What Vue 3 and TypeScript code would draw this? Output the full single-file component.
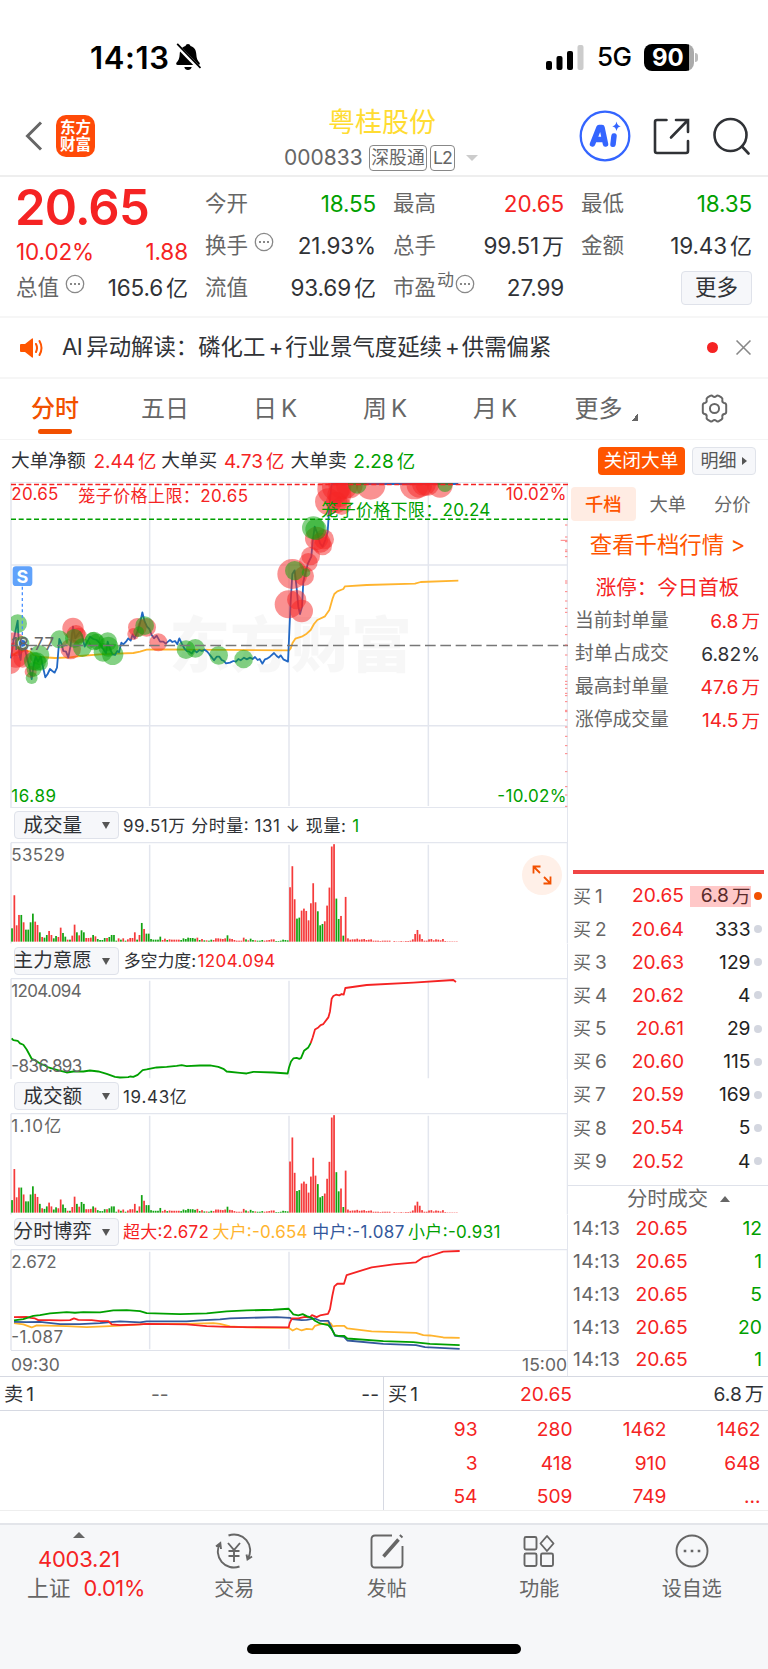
<script setup lang="ts">
type Tone = 'up' | 'down' | 'ink'

interface Quote { label: string; value: string; tone: Tone; info?: boolean; sup?: string }

const quotes: Quote[] = [
  { label: '今开', value: '18.55', tone: 'down' },
  { label: '最高', value: '20.65', tone: 'up' },
  { label: '最低', value: '18.35', tone: 'down' },
  { label: '换手', value: '21.93%', tone: 'ink', info: true },
  { label: '总手', value: '99.51万', tone: 'ink' },
  { label: '金额', value: '19.43亿', tone: 'ink' },
  { label: '流值', value: '93.69亿', tone: 'ink' },
  { label: '市盈', value: '27.99', tone: 'ink', info: true, sup: '动' },
]

const sealStats: { label: string; value: string; tone: Tone }[] = [
  { label: '当前封单量', value: '6.8万', tone: 'up' },
  { label: '封单占成交', value: '6.82%', tone: 'ink' },
  { label: '最高封单量', value: '47.6万', tone: 'up' },
  { label: '涨停成交量', value: '14.5万', tone: 'up' },
]

const bids: [string, string][] = [
  ['20.65', '6.8万'], ['20.64', '333'], ['20.63', '129'], ['20.62', '4'], ['20.61', '29'],
  ['20.60', '115'], ['20.59', '169'], ['20.54', '5'], ['20.52', '4'],
]
const trades = ['12', '1', '5', '20', '1']
const queue = ['93', '280', '1462', '1462', '3', '418', '910', '648', '54', '509', '749', '...']

/* Charts are drawn in units of one third of a pixel. */
const pricePath = '33,550 40,500 46,470 53,437 58,540 62,555 66,505 72,510 80,545 88,575 95,612 101,570 107,545 114,560 122,545 128,572 136,607 143,597 150,582 157,588 164,593 171,578 178,492 184,505 190,528 198,530 205,547 212,510 219,455 226,490 232,480 240,470 247,485 254,515 262,500 270,485 280,492 290,495 300,505 308,520 318,535 323,500 331,525 338,538 345,540 352,528 357,532 364,503 370,508 378,500 385,490 392,497 398,478 404,490 412,470 420,445 427,412 434,440 441,455 448,462 455,480 462,490 470,482 480,500 490,500 497,506 504,500 510,495 517,501 525,498 532,508 538,490 545,505 553,520 560,528 568,530 575,536 582,525 590,532 598,525 606,528 614,524 622,530 628,538 636,548 642,556 650,545 658,545 665,555 672,558 678,565 690,563 700,558 708,560 715,552 722,556 732,548 740,553 750,548 758,552 765,546 773,555 779,552 787,566 795,553 803,550 810,545 822,534 830,543 836,548 842,541 850,553 858,557 864,560 868,470 872,380 877,297 884,286 890,340 895,395 900,417 906,395 910,320 916,295 924,265 934,245 938,200 944,155 952,175 960,205 968,215 976,195 983,170 988,95 995,27 1375,27'
const avgPath = '33,545 45,535 60,530 75,526 90,529 100,540 120,546 165,549 210,547 240,543 300,538 350,536 400,534 420,530 440,524 480,523 867,526 872,520 878,503 886,491 905,485 920,476 932,465 942,447 952,435 975,424 988,405 998,370 1003,357 1012,349 1030,342 1035,334 1100,330 1245,326 1262,321 1375,317'

const buyDots: number[][] = [
  [42, 508, 36], [48, 540, 38], [30, 565, 32], [68, 550, 28], [92, 590, 18], [212, 522, 31], [219, 460, 32], [228, 478, 28], [236, 482, 24],
  [400, 477, 18], [412, 457, 28], [440, 457, 28], [475, 502, 27],
  [877, 297, 45], [866, 388, 42], [890, 374, 29], [905, 408, 34], [912, 303, 30], [925, 262, 28], [932, 243, 28],
  [950, 190, 35], [972, 193, 30], [968, 213, 28], [962, 203, 30],
  [985, 80, 40], [1000, 42, 48], [1010, 35, 44], [1030, 28, 45], [1025, 92, 28], [1010, 82, 32], [1048, 30, 40], [1112, 30, 44], [1018, 60, 36],
  [1243, 30, 43], [1258, 30, 38], [1272, 26, 36], [1282, 26, 36], [1320, 30, 38],
]
const sellDots: number[][] = [
  [53, 446, 28], [66, 505, 22], [178, 493, 27], [247, 518, 28], [223, 490, 28], [282, 498, 28], [278, 493, 22], [290, 500, 24],
  [323, 500, 28], [309, 532, 28], [325, 515, 30], [338, 538, 32], [118, 540, 30], [110, 560, 28], [122, 565, 22], [100, 558, 28],
  [95, 609, 18], [102, 583, 22], [416, 470, 16], [434, 452, 28], [558, 524, 28], [586, 520, 28], [656, 541, 28], [731, 552, 28],
  [884, 287, 29], [918, 293, 13], [940, 158, 34], [948, 163, 32], [1072, 28, 28], [1335, 28, 23],
]
const ticks = [150, 186, 196, 200, 225, 230, 245, 318, 324, 350, 378, 400, 412, 454, 479, 510, 540, 575, 582, 600, 619, 628, 640, 655, 662, 680, 706, 710, 735, 756, 784, 812, 836, 890, 935, 960, 994]

interface Bar { x: number; h: number; up: boolean }
const volumeCode = 'g40 r139 r49 r80 g80 r58 g36 g36 g58 g84 r60 r50 g28 r14 g12 g20 r32 r20 g10 g17 r14 r42 g26 g15 r6 g6 r18 r51 g28 r19 g34 g28 r11 r11 r12 g20 r16 g8 g5 g5 g11 r11 g14 g20 g20 g3 r10 g6 r10 g3 r7 r11 r11 r28 g6 r20 g56 r38 g24 g24 g8 g6 g6 g6 g15 r5 r9 g5 r7 r6 r6 r6 r6 g5 g10 g8 g12 g11 g11 g9 r12 g5 r8 g4 r4 g3 g6 r5 r10 r10 r9 r8 r10 g19 r9 r8 r5 r3 r3 r3 r12 g7 r4 g9 g5 r4 g3 g3 g5 r3 r4 r5 r7 r7 g2 g2 g3 g6 g5 g4 r163 r226 r127 g69 g72 r93 r99 r92 r64 r115 r175 r118 g91 g49 g53 r61 r108 r162 r285 r292 g129 g68 r77 g18 r134 r10 r6 r7 r7 r9 r6 r7 r8 r5 r6 r7 r3 r3 r3 r2 r3 r3 r3 r3 r0 r2 r1 r1 r2 r1 r2 r2 r3 r7 r23 r35 r22 r8 r3 r3 r7 r8 r4 r7 r6 r4 r8 r2 r1 r1 r1 r1 r1'
const toBars = (scale: number): Bar[] =>
  volumeCode.split(' ').map((item, i) => {
    const raw = Number(item.slice(1))
    const h = raw > 200 ? raw - (1 - scale) * Math.max(0, 290 - raw) * 0.2 : raw * scale
    return { x: 33.500 + i * 6.95, h, up: item[0] === 'r' }
  })

const bearPath = '35,181 40,186 53,188 60,196 70,200 80,214 95,242 105,246 120,256 135,262 145,268 170,275 200,283 220,280 250,280 270,277 295,280 320,287 345,296 360,298 385,297 390,295 400,296 413,290 428,276 440,274 470,268 500,266 530,263 545,261 560,264 600,262 630,262 655,266 670,272 680,280 720,284 740,286 760,281 820,283 863,286 867,268 873,250 880,241 890,239 898,242 903,240 912,218 925,208 932,195'
const bullPath = '932,195 938,178 945,154 955,148 962,141 970,138 985,118 990,100 995,62 1000,54 1008,50 1018,52 1025,48 1031,50 1036,30 1100,21 1240,14 1360,6 1368,12'
const game = [
  { c: 'gold', p: '42,222 70,226 95,235 110,229 200,231 260,234 330,231 400,227 440,224 560,224 640,222 660,224 690,232 740,235 866,236 878,244 890,238 905,244 920,239 937,241 945,230 960,226 985,222 992,222 998,232 1010,230 1032,230 1042,238 1115,247 1248,251 1270,258 1290,259 1330,265 1379,266' },
  { c: 'blue', p: '42,218 80,219 120,218 180,225 240,225 300,222 330,219 360,217 420,220 440,217 560,217 600,214 660,211 690,208 830,204 870,206 876,210 905,213 920,212 945,208 960,215 985,215 995,238 1005,260 1032,263 1042,274 1150,284 1248,288 1275,294 1379,299' },
  { c: 'red', p: '42,204 80,203 92,206 105,208 115,213 150,213 180,214 210,213 222,208 235,212 275,213 300,216 325,216 335,226 360,228 420,226 440,224 560,226 620,231 680,233 740,234 866,235 869,222 876,208 895,208 915,203 930,204 936,198 950,204 960,199 984,194 990,180 997,140 1003,112 1012,104 1032,104 1040,78 1115,55 1180,46 1248,40 1270,25 1290,21 1330,8 1379,6' },
  { c: 'green', p: '42,214 70,210 100,200 120,198 150,193 200,189 225,191 250,189 300,190 340,184 380,183 420,186 440,192 540,195 620,193 680,187 740,184 820,182 866,179 880,196 895,199 908,195 920,201 935,206 945,215 960,223 985,228 995,240 1005,258 1015,260 1032,260 1042,268 1150,276 1240,279 1290,284 1379,288' },
]

interface Panel {
  name: string
  kind: 'bars' | 'force' | 'game'
  notes: { t: string; c: string; w: number }[]
  top: string
  topW: number
  bottom?: string
  bottomW?: number
  bars?: Bar[]
}
const panels: Panel[] = [
  { name: '成交量', kind: 'bars', top: '53529', topW: 160, bars: toBars(1), notes: [{ t: '99.51万 分时量: 131 ↓ 现量:', c: 'ink', w: 670 }, { t: '1', c: 'down', w: 0 }] },
  { name: '主力意愿', kind: 'force', top: '1204.094', topW: 211, bottom: '-836.893', bottomW: 213, notes: [{ t: '多空力度:', c: 'ink', w: 218 }, { t: '1204.094', c: 'up', w: 234 }] },
  { name: '成交额', kind: 'bars', top: '1.10亿', topW: 150, bars: toBars(0.94), notes: [{ t: '19.43亿', c: 'ink', w: 192 }] },
  { name: '分时博弈', kind: 'game', top: '2.672', topW: 136, bottom: '-1.087', bottomW: 155, notes: [{ t: '超大:2.672', c: 'up', w: 258 }, { t: '大户:-0.654', c: 'gold', w: 286 }, { t: '中户:-1.087', c: 'blue', w: 277 }, { t: '小户:-0.931', c: 'down', w: 278 }] },
]
const noteX: number[][] = [[369, 1058], [371, 593], [369], [369, 638, 938, 1226]]
</script>

<template>
  <div class="app">
    <header class="status">
      <span class="clock">14:13</span>
      <svg class="bell" viewBox="0 0 26 28" width="26" height="28">
        <path d="M13 1c1.300 0 2.200.8 2.500 1.900 3.900 1.100 5.600 4.100 5.800 8.300.2 4.300 1.200 6.300 3.100 8.300.9 1 .3 2.500-1.100 2.500H2.700c-1.400 0-2-1.500-1.100-2.500 1.900-2 2.900-4 3.100-8.300.2-4.200 1.900-7.200 5.800-8.300C10.800 1.800 11.700 1 13 1z" />
        <path d="M9.300 24h7.400c-.4 2-1.800 3-3.700 3s-3.300-1-3.700-3z" />
        <path d="M1 1.500 25.500 26.500" class="bell-gap" /><path d="M2.200.8 25.500 25" class="bell-slash" />
      </svg>
      <svg class="signal" viewBox="0 0 38 25" width="38" height="25">
        <rect x="0" y="16" width="6" height="9" rx="2" /><rect x="10.500" y="11" width="6" height="14" rx="2" />
        <rect x="21" y="6" width="6" height="19" rx="2" /><rect x="31.500" y="0" width="6" height="25" rx="2" fill="#ccc" />
      </svg>
      <span class="net">5G</span>
      <span class="battery">90</span><i class="nub"></i>
    </header>

    <nav class="head">
      <svg class="back" viewBox="0 0 18 30" width="18" height="30"><path d="M16 1.500 2.500 15 16 28.500" /></svg>
      <div class="logo"><span>东方</span><span>财富</span></div>
      <div class="title">
        <h1>粤桂股份</h1>
        <div class="code"><span class="num">000833</span><span class="tag">深股通</span><span class="tag l2">L2</span><i></i></div>
      </div>
      <svg class="ai" viewBox="0 0 52 52" width="52" height="52">
        <circle cx="26" cy="26" r="24.300" fill="none" stroke="#3465ff" stroke-width="2.300" />
        <path d="M13.500 34 20 17.500h3l3.500 16.500M17 29.500h8" fill="none" stroke="#3465ff" stroke-width="5.500" stroke-linejoin="round" stroke-linecap="round" />
        <path d="m35 26-1 8.300" fill="none" stroke="#3465ff" stroke-width="5.500" stroke-linecap="round" />
        <path d="M37.500 11.500c.7 3 1.500 4 4.200 4.800-2.700.8-3.500 1.800-4.200 4.800-.7-3-1.500-4-4.200-4.800 2.700-.8 3.500-1.800 4.200-4.800z" fill="#3465ff" />
      </svg>
      <svg class="share" viewBox="0 0 37 37" width="37" height="37"><path d="M13.500 2H4Q2 2 2 4v29q0 2 2 2h29q2 0 2-2V23M18 19.500 34.500 2.500M23 2h12v12" /></svg>
      <svg class="search" viewBox="0 0 38 38" width="38" height="38"><circle cx="17.500" cy="18" r="16" /><path d="m29 29.500 6.500 7" /></svg>
    </nav>

    <section class="quote">
      <div class="last">
        <b>20.65</b>
        <div class="pair up"><span>10.02%</span><span>1.88</span></div>
        <div class="cell cap"><span class="lab">总值<svg class="info" viewBox="0 0 20 20"><circle cx="10" cy="10" r="8.700" /><path d="M5 10h2M9 10h2M13 10h2" /></svg></span><span class="val ink">165.6<em>亿</em></span></div>
      </div>
      <div class="cells">
        <div v-for="q in quotes" :key="q.label" class="cell">
          <span class="lab">{{ q.label }}<sup v-if="q.sup">{{ q.sup }}</sup><svg v-if="q.info" class="info" :class="{ tight: q.sup }" viewBox="0 0 20 20"><circle cx="10" cy="10" r="8.700" /><path d="M5 10h2M9 10h2M13 10h2" /></svg></span>
          <span class="val" :class="q.tone">{{ q.value.replace(/[万亿]/, '') }}<em v-if="/[万亿]/.test(q.value)">{{ q.value.slice(-1) }}</em></span>
        </div>
        <div class="cell"><button class="more">更多</button></div>
      </div>
    </section>

    <section class="notice">
      <svg viewBox="0 0 24 20" width="24" height="20"><path d="M1 6h4l7-5.500q1-.5 1 .8v17.400q0 1.300-1 .8L5 14H1Q0 14 0 13V7q0-1 1-1z" fill="#ff5500" /><path d="M16 6q2 4 0 8M19.500 3q4 7 0 14" fill="none" stroke="#ff5500" stroke-width="2" stroke-linecap="round" /></svg>
      <p><span class="lat">AI</span>异动解读：磷化工<span class="plus">+</span>行业景气度延续<span class="plus">+</span>供需偏紧</p>
      <i class="dot"></i>
      <svg class="close" viewBox="0 0 14 14" width="15" height="15"><path d="m.5.5 13 13M13.500.5l-13 13" /></svg>
    </section>

    <section class="tabs">
      <span class="tab on">分时</span><span class="tab">五日</span><span class="tab">日<u>K</u></span><span class="tab">周<u>K</u></span><span class="tab">月<u>K</u></span>
      <span class="tab wide">更多<i></i></span>
      <span class="tab gear"><svg viewBox="0 0 28 28" width="29" height="29"><path d="M9.800 1.800q1.500-.9 2.600.4 1.600 1.500 3.200 0 1.100-1.300 2.600-.4l2.400 1.400q1.500 1 1 2.600-.5 2.300 1.700 2.900 2 .3 2 2v6.600q0 1.700-2 2-2.200.6-1.700 2.900.5 1.600-1 2.600l-2.400 1.400q-1.500.9-2.600-.4-1.600-1.500-3.200 0-1.100 1.300-2.600.4l-2.400-1.400q-1.500-1-1-2.600.5-2.300-1.700-2.900-2-.3-2-2v-6.600q0-1.700 2-2 2.200-.6 1.700-2.900-.5-1.600 1-2.600z" /><circle cx="14" cy="14" r="4.400" /></svg></span>
    </section>

    <section class="orders">
      <span>大单净额</span><span class="up n lead">2.44<em>亿</em></span><span>大单买</span><span class="up n">4.73<em>亿</em></span><span>大单卖</span><span class="down n">2.28<em>亿</em></span>
      <button class="hot">关闭大单</button><button class="detail">明细<i></i></button>
    </section>

    <main class="board">
      <div class="charts">
        <svg class="price" viewBox="0 21 1704 978" preserveAspectRatio="none">
          <text x="508" y="577" class="mark" textLength="728">东方财富</text>
          <g class="grid"><path d="M33 22H1704M33 270H1704M33 752H1704M33 998.500H1704M33 22V999M449 30V993M867 30V993M1285 30V993M1702.500 22V999" /></g>
          <polyline :points="avgPath" class="line gold" />
          <polyline :points="pricePath" class="line navy" />
          <circle v-for="(d, i) in buyDots" :key="'b' + i" :cx="d[0]" :cy="d[1]" :r="d[2]" fill="#f52323" fill-opacity=".5" :clip-path="'url(#plot)'" />
          <circle v-for="(d, i) in sellDots" :key="'s' + i" :cx="d[0]" :cy="d[1]" :r="d[2]" fill="#0aa30a" fill-opacity=".5" :clip-path="'url(#plot)'" />
          <clipPath id="plot"><rect x="33" y="24" width="1670" height="970" /></clipPath>
          <path d="M33 511.500H1704" stroke="#777" stroke-width="4" stroke-dasharray="32 14" />
          <path d="M33 28.500H1704" stroke="#f52323" stroke-width="4.500" stroke-dasharray="15 8" />
          <path d="M33 133H1704" stroke="#00a000" stroke-width="4.500" stroke-dasharray="15 8" />
          <path v-for="y in ticks" :key="y" :d="`M${y === 196 ? 1682 : 1695} ${y}H1702`" stroke="#f66" stroke-width="2.500" />
          <path d="M67 335V490" stroke="#4a90ff" stroke-width="4" stroke-dasharray="9 8" />
          <rect x="38" y="274" width="59" height="59" rx="10" fill="#60a2fb" />
          <text x="67" y="323" class="badge">S</text>
          <circle cx="67" cy="505" r="12" fill="#2a6fd0" stroke="#cfe3e6" stroke-width="4" />
          <text x="34" y="526" class="t grey" textLength="128">18.77</text>
          <text x="34" y="76" class="t red" textLength="141">20.65</text>
          <text x="235" y="80" class="t red" textLength="509" xml:space="preserve">笼子价格上限：20.65</text>
          <text x="964" y="122" class="t green" textLength="507">笼子价格下限：20.24</text>
          <text x="1517" y="75" class="t red" textLength="182">10.02%</text>
          <text x="34" y="981" class="t green" textLength="134">16.89</text>
          <text x="1492" y="981" class="t green" textLength="207">-10.02%</text>
        </svg>

        <section v-for="(p, pi) in panels" :key="p.name" class="panel">
          <header>
            <button class="pick"><span>{{ p.name }}</span><i></i></button>
            <svg class="notes" viewBox="357 0 1350 99">
              <text v-for="(n, ni) in p.notes" :key="n.t" :x="noteX[pi][ni]" y="69" class="t" :class="n.c" :textLength="n.w || undefined">{{ n.t }}</text>
            </svg>
          </header>
          <svg class="plot" viewBox="0 0 1704 304" preserveAspectRatio="none">
            <path class="grid" d="M33 1.500H1704M449 8V300M867 8V300M1285 8V300M33 2V304M1702.500 0V304" />
            <g v-if="p.bars">
              <rect v-for="b in p.bars" :key="b.x" :x="b.x" :y="298.500 - b.h" width="5.200" :height="b.h" :fill="b.up ? '#f53b3b' : '#12a312'" />
            </g>
            <g v-else-if="p.kind === 'force'"><polyline :points="bearPath" class="line green" /><polyline :points="bullPath" class="line red" /></g>
            <g v-else><polyline v-for="g in game" :key="g.c" :points="g.p" class="line" :class="g.c" /></g>
            <text x="34" y="57" class="t grey" :textLength="p.topW">{{ p.top }}</text>
            <text v-if="p.bottom" x="34" y="281" class="t grey" :textLength="p.bottomW">{{ p.bottom }}</text>
          </svg>
          <div v-if="pi === 0" class="expand"><svg viewBox="0 0 20 20" width="20" height="20"><path d="M1.500 8.500v-7h7M2 2l6 6M18.500 11.500v7h-7M18 18l-6-6" /></svg></div>
        </section>
        <footer class="axis"><span>09:30</span><span>15:00</span></footer>
      </div>

      <aside class="side">
        <div class="sub"><span class="on">千档</span><span>大单</span><span>分价</span></div>
        <div class="deep">查看千档行情 <span>&gt;</span></div>
        <div class="limit">涨停：今日首板</div>
        <div class="stats"><div v-for="s in sealStats" :key="s.label"><span>{{ s.label }}</span><span class="n" :class="s.tone">{{ s.value.replace('万', '') }}<em v-if="s.value.includes('万')">万</em></span></div></div>
        <div class="rule"></div>
        <div class="bids">
          <div v-for="(b, i) in bids" :key="b[0]" :class="{ first: i === 0 }">
            <span class="lv">买<em>{{ i + 1 }}</em></span><span class="px">{{ b[0] }}</span>
            <span class="qty"><b>{{ b[1].replace('万', '') }}<em v-if="i === 0">万</em></b></span><i></i>
          </div>
        </div>
        <div class="deal-title">分时成交<i></i></div>
        <div class="deals"><div v-for="(t, i) in trades" :key="i"><span class="time">14:13</span><span class="up">20.65</span><span class="down">{{ t }}</span></div></div>
      </aside>
    </main>

    <section class="depth">
      <div class="ask"><div class="row"><span>卖<em>1</em></span><span class="dash">--</span><span>--</span></div></div>
      <div class="bid">
        <div class="row"><span>买<em>1</em></span><span class="up">20.65</span><span>6.8<em>万</em></span></div>
        <div class="queue"><span v-for="(q, i) in queue" :key="i">{{ q }}</span></div>
      </div>
    </section>

    <footer class="bar">
      <div class="items">
        <div class="index"><i></i><span class="up">4003.21</span><p>上证<span class="up">0.01%</span></p></div>
        <div class="item"><svg viewBox="0 0 38 36"><path d="M13.500 2.500A16 16 0 0 1 33 25.500M24.500 33.500A16 16 0 0 1 5 10.500M1 13.500l4.300-3.500.7 6M37 23.500l-4.500 3-1-5M13 10l6 7 6-7M19 17v12M13.500 18h11M13.500 23h11" /></svg><span>交易</span></div>
        <div class="item"><svg viewBox="0 0 38 36"><path d="M24 2.500H7Q3.500 2.500 3.500 6v25q0 3.500 3.500 3.500h24q3.500 0 3.500-3.500V13" /><path d="m15.500 23.500 15-17M32.500 4l1.300-1.500" stroke-width="3.500" /></svg><span>发帖</span></div>
        <div class="item"><svg viewBox="0 0 38 36"><rect x="4.500" y="4" width="12" height="12.500" rx="1.500" /><rect x="4.500" y="20.500" width="12" height="12.500" rx="1.500" /><rect x="21" y="20.500" width="12" height="12.500" rx="1.500" /><path d="m27 3 6.500 7.500L27 18l-6.500-7.500z" stroke-linejoin="round" /></svg><span>功能</span></div>
        <div class="item"><svg viewBox="0 0 38 36"><circle cx="19" cy="18" r="15.500" /><path d="M10.700 18h2.600M17.700 18h2.600M24.700 18h2.600" stroke-width="2.600" /></svg><span>设自选</span></div>
      </div>
      <div class="home"></div>
    </footer>
  </div>
</template>

<style>
body { margin: 0; background: #fff; }
</style>

<style scoped>
.app { width: 768px; height: 1669px; overflow: hidden; background: #fff; color: #303236; font-family: Inter, "Noto Sans CJK SC", sans-serif; font-size: 20px; line-height: 1; white-space: nowrap; }
.app * { box-sizing: border-box; }
em, i, u { font-style: normal; text-decoration: none; }
i { display: block; }
button { font: inherit; padding: 0; margin: 0; color: inherit; }
.up { color: #f52323; } .down { color: #00a000; } .ink { color: #303236; }
.status { height: 93px; padding: 21px 0 0 90px; display: flex; align-items: center; color: #000; }
.clock { font-size: 31px; font-weight: 600; width: 85px; letter-spacing: .6px; }
.bell-gap { stroke: #fff; stroke-width: 4; } .bell-slash { stroke: #000; stroke-width: 1.8; }
.signal { margin-left: 345px; }
.net { font-size: 26px; font-weight: 500; width: 46px; margin-left: 13px; letter-spacing: -.5px; }
.battery { margin-left: 1px; width: 50px; height: 27px; border-radius: 8px; background: linear-gradient(90deg, #000 45px, #aaa 45px); color: #fff; font-weight: 700; font-size: 24px; line-height: 27px; padding-left: 8px; }
.nub { width: 3px; height: 9px; background: #bbb; border-radius: 0 3px 3px 0; margin-left: 1px; }
.head { height: 84px; border-bottom: 2px solid #eee; display: flex; align-items: center; padding: 4px 17px 0 25px; }
.back path { fill: none; stroke: #666; stroke-width: 3; }
.logo { margin-left: 13px; width: 41px; height: 42px; background: #ff4a08; border-radius: 10px; color: #fff; font-weight: 700; font-size: 15.500px; line-height: 17px; display: grid; place-content: center; }
.title { width: 300px; margin-left: 137px; text-align: center; padding-top: 7px; }
h1 { margin: 0 0 9px; width: 300px; font-size: 27px; font-weight: 400; color: #ffdc32; line-height: 27px; }
.code { display: flex; align-items: center; height: 26px; padding-left: 52px; color: #666; }
.num { font-size: 21px; width: 85px; text-align: left; letter-spacing: 0; }
.tag { border: 1.500px solid #888; border-radius: 4px; width: 58px; height: 26px; line-height: 24px; font-size: 17.800px; }
.l2 { width: 25px; margin-left: 3px; letter-spacing: -1px; }
.code i { border: 6px solid transparent; border-top-color: #ccc; border-bottom: 0; margin-left: 11px; }
.ai { margin-left: 47px; } .share { margin-left: 22px; } .search { margin-left: 23px; }
.share path, .search * { fill: none; stroke: #303236; stroke-width: 2.600; stroke-linecap: round; }
.quote { height: 141px; border-bottom: 2px solid #f6f6f6; padding: 6px 16px 0 17px; display: flex; gap: 17px; }
.last { width: 171px; }
.last b { display: block; height: 48px; line-height: 50px; font-size: 49px; font-weight: 600; color: #f52323; letter-spacing: -.800px; margin-left: -2px; }
.pair { display: flex; justify-content: space-between; height: 41px; line-height: 42px; font-size: 22.500px; letter-spacing: -.1px; margin-left: -1px; }
.cells { flex: 1; display: grid; grid-template-columns: repeat(3, 171px); grid-auto-rows: 42px; column-gap: 17px; }
.cell { display: flex; justify-content: space-between; align-items: center; height: 42px; }
.cap { margin-top: -5px; height: 42px; margin-left: -1px; }
.lab { font-size: 21.500px; color: #666; display: flex; align-items: center; }
.val { font-size: 22.500px; letter-spacing: -.15px; display: flex; align-items: center; }
.val em { font-size: 22px; margin-left: 3px; letter-spacing: 0; }
.info { width: 20px; height: 20px; margin: -9px 0 0 6px; fill: none; stroke: #888; stroke-width: 1.300; } .info path { stroke-width: 1.800; } .info.tight { margin-left: 1px; }
sup { font-size: 17px; margin-top: -15px; line-height: 17px; margin-left: 1px; vertical-align: baseline; }
.more { width: 71px; height: 34px; margin-left: auto; border: 1.500px solid #dfe2ea; border-radius: 4px; background: #f6f7fa; font-size: 21.500px; }
.notice { height: 61px; border-bottom: 2px solid #f6f6f6; padding-left: 20px; display: flex; align-items: center; }
.notice p { margin: 0 0 0 18px; width: 645px; font-size: 22.400px; }
.lat { margin-right: 4px; letter-spacing: -.6px; } .plus { margin: 0 2px 0 3px; }
.dot { width: 11px; height: 11px; border-radius: 50%; background: #f52323; }
.close { margin-left: 18px; fill: none; stroke: #888; stroke-width: 1.500; }
.tabs { height: 61px; border-bottom: 1.500px solid #f4f4f4; display: flex; align-items: center; color: #666; font-size: 24px; }
.tab { width: 110px; display: flex; justify-content: center; align-items: center; height: 100%; position: relative; padding-bottom: 1px; }
.tab u { margin-left: 4px; }
.on { color: #f25000; font-weight: 500; }
.tab.on::after { content: ""; position: absolute; left: 38px; top: 50px; width: 34px; height: 5px; border-radius: 2.500px; background: #f25000; }
.wide { width: 102px; margin-right: 12px; } .wide i { width: 6px; height: 8px; background: linear-gradient(to bottom right, transparent 50%, #666 50%); margin: 17px -10px 0 9px; }
.gear svg, .close { overflow: visible; } .gear svg { fill: none; stroke: #666; stroke-width: 1.900; }
.gear { width: 100px; }
.orders { height: 42px; padding-left: 11px; display: flex; align-items: center; font-size: 18.700px; }
.orders .n { width: 60px; margin: 0 6.700px; display: flex; justify-content: space-between; font-size: 19px; }
.orders .lead { margin: 0 7.700px; }
.hot { width: 87px; height: 28px; background: #ff5500; color: #fff; border: 0; border-radius: 4px; margin-left: 177.500px; font-size: 18.700px; }
.detail { width: 64px; height: 28px; border: 1.500px solid #e0e3ea; background: #f6f7fa; border-radius: 4px; margin-left: 7px; color: #555; font-size: 18px; display: flex; align-items: center; justify-content: center; gap: 5px; }
.detail i { border: 4px solid transparent; border-left: 5px solid #555; border-right: 0; }
.board { height: 894px; display: grid; grid-template-columns: 568px 200px; }
svg { display: block; flex: none; }
.price { width: 568px; height: 326px; }
.grid, .grid path { fill: none; stroke: #e3e6ee; stroke-width: 4.500; }
.mark { font-family: "Noto Sans CJK SC", sans-serif; font-weight: 900; font-size: 182px; fill: #000; fill-opacity: .03; }
.t { font-size: 51px; fill: #303236; }
.t.grey { fill: #666; } .t.red, .t.up { fill: #f52323; } .t.green, .t.down { fill: #00a000; } .t.gold { fill: #ffb42e; } .t.blue { fill: #33589c; }
.badge { font-size: 54px; font-weight: 700; fill: #fff; text-anchor: middle; }
.line { fill: none; stroke-width: 5.400; stroke-linejoin: round; } .line.gold { stroke: #ffb42e; } .line.navy { stroke: #2268c4; } .line.red { stroke: #f52323; } .line.green { stroke: #00a000; } .line.blue { stroke: #33589c; }
.panel { height: 135.500px; position: relative; }
.panel header { height: 34px; display: flex; align-items: center; padding-left: 14px; border-right: 1px solid #e3e6ee; }
.pick { width: 104.500px; height: 28px; border: 1.500px solid #dfe2ea; border-radius: 4px; background: #f6f7fa; display: flex; align-items: center; font-size: 19.600px; padding: 1px 8px 0 0; }
.pick span { flex: 1; text-align: center; margin: 0 8px 0 -3px; } .pick i { border: 4.500px solid transparent; border-top: 7px solid #555; border-bottom: 0; }
.notes { width: 449px; height: 33px; margin-right: -1px; }
.plot { width: 568px; height: 101.500px; }
.expand { position: absolute; left: 522px; top: 47px; width: 40px; height: 40px; border-radius: 50%; background: #fff0e8; display: grid; place-items: center; }
.expand path { fill: none; stroke: #f25000; stroke-width: 1.800; }
.axis { height: 26px; border-top: 1px solid #dfe2ea; border-right: 1px solid #e3e6ee; margin-left: 11px; display: flex; justify-content: space-between; align-items: center; font-size: 17.500px; color: #666; padding-top: 2px; }
.side { padding-top: 5px; }
.sub { display: flex; padding-left: 3px; height: 34px; align-items: center; color: #666; font-size: 18.300px; }
.sub span { width: 64.500px; height: 34px; line-height: 34px; text-align: center; border-radius: 4px; } .sub .on { background: #ffece3; color: #ff5500; font-weight: 500; }
.deep { height: 48px; line-height: 48px; text-align: center; color: #ff5500; font-size: 22.400px; padding-right: 1px; }
.limit { height: 37px; line-height: 38px; text-align: center; color: #f52323; font-size: 20.500px; padding-right: 1px; }
.stats { height: 265px; margin-top: -1px; margin-bottom: 1px; padding: 0 8px 0 7px; font-size: 18.800px; color: #666; }
.stats div { height: 33.100px; display: flex; justify-content: space-between; align-items: center; }
.n em { margin-left: 3px; font-size: .97em; } .stats .n { font-size: 19.200px; display: flex; align-items: center; }
.rule { height: 3.500px; margin: -1px 4px 0 5px; background: #f04545; }
.bids { padding: 6px 0 0 5px; height: 311px; }
.bids div { height: 33.150px; display: grid; grid-template-columns: 51px 60px 66.500px 18px; align-items: center; font-size: 19.200px; color: #666; }
.lv { font-size: 18px; } .lv em { margin-left: 4px; font-size: 19px; }
.px { color: #f52323; text-align: right; } .qty { text-align: right; color: #222; display: flex; justify-content: flex-end; } .qty b { font-weight: 400; display: flex; align-items: center; }
.first .qty b { width: 61px; height: 21px; background: #ffc8c8; color: #5a2a2a; justify-content: flex-end; } .qty em { margin-left: 3px; font-size: 18.500px; }
.bids i { width: 8px; height: 8px; border-radius: 50%; background: #d3d6df; margin-left: 3px; } .bids .first i { background: #f25000; }
.deal-title { border-top: 1.500px solid #dfe2ea; height: 28px; line-height: 28px; display: flex; align-items: center; padding-left: 59px; color: #666; font-size: 20.300px; } .deal-title i { border: 5px solid transparent; border-bottom: 6px solid #666; border-top: 0; margin-left: 12px; }
.deals div { height: 32.800px; padding: 0 6px 0 5px; display: grid; grid-template-columns: 62.500px 60px 1fr; align-items: center; font-size: 19.300px; color: #666; } .deals .down { text-align: right; } .time { letter-spacing: .35px; }
.depth { height: 135px; border-top: 1.500px solid #d6d9e2; border-bottom: 1px solid #eee; display: grid; grid-template-columns: 384px 384px; font-size: 19.200px; }
.row { height: 34px; padding: 3px 4px 0 4px; border-bottom: 1.500px solid #d6d9e2; display: grid; grid-template-columns: 1fr 1fr 1fr; align-items: center; } .row span:last-child { text-align: right; } .row em { margin-left: 3px; }
.ask { border-right: 1.500px solid #d6d9e2; height: 133px; } .dash { padding-left: 22px; color: #666; }
.bid .row { grid-template-columns: 94px 90px 1fr; } .bid .up { text-align: right; }
.queue { display: grid; grid-template-columns: 93.500px 95px 94px 94px; grid-auto-rows: 33.600px; align-items: center; padding-top: 2px; text-align: right; color: #f52323; }
.bar { height: 158px; margin-top: 12px; border-top: 2px solid #e3e5ea; background: #f6f7f9; color: #666; }
.items { display: grid; grid-template-columns: 158px 152.500px 152.500px 152.500px 152.500px; height: 90px; font-size: 20px; }
.item, .index { display: flex; flex-direction: column; align-items: center; height: 80px; }
.item svg { width: 38px; height: 36px; fill: none; stroke: #666; stroke-width: 1.900; margin-top: 8px; } .item span { margin-top: 10px; }
.index i { border: 6px solid transparent; border-bottom: 6px solid #666; border-top: 0; margin-top: 7px; } .index > span { font-size: 22px; margin-top: 10px; letter-spacing: -.25px; } .index p { margin: 8px 0 0 14px; font-size: 21.800px; } .index p span { margin-left: 13px; letter-spacing: -.3px; }
.home { width: 274px; height: 10px; border-radius: 5px; background: #000; margin: 29px 0 0 247px; }
</style>
